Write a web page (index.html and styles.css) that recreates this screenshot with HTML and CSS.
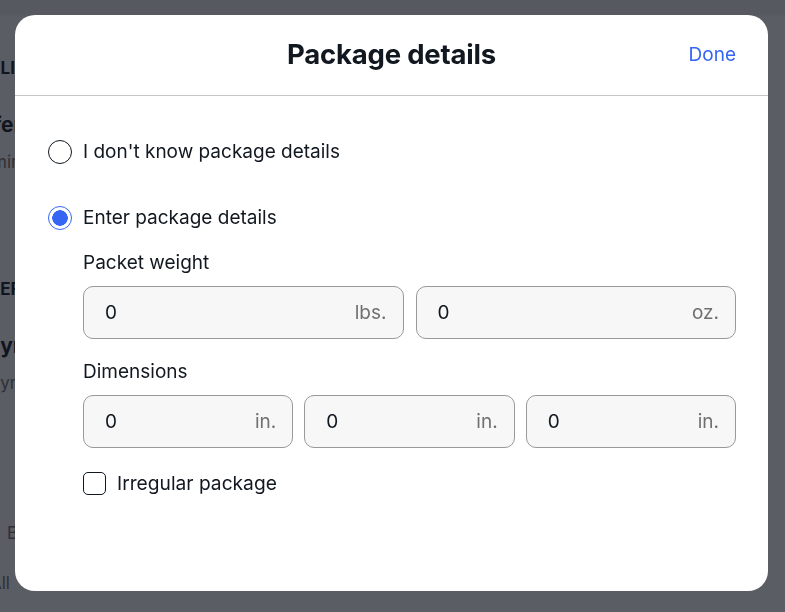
FILE: index.html
```html
<!DOCTYPE html>
<html lang="en">
<head>
    <meta charset="UTF-8">
    <meta name="viewport" content="width=device-width, initial-scale=1.0">
    <title>Package details</title>
    <link rel="stylesheet" href="styles.css">
</head>
<body>
    <div class="page">
        <section class="page-row first">
            <h3 class="page-kicker">DELIVERY</h3>
            <p class="page-strong">Prefer</p>
            <p class="page-muted">Timing</p>
        </section>
        <section class="page-row">
            <h3 class="page-kicker">PREFERENCES</h3>
            <p class="page-strong second">Payr</p>
            <p class="page-muted second">Dynamic</p>
            <p class="page-muted spaced">Buy</p>
            <p class="page-muted tight">All</p>
        </section>
    </div>

    <div class="overlay">
        <div class="modal">
            <header class="modal-header">
                <span></span>
                <h2 class="modal-title">Package details</h2>
                <button class="done-btn">Done</button>
            </header>

            <div class="modal-body">
                <label class="radio-row">
                    <input type="radio" name="pkg" value="unknown">
                    <span class="radio-mark"></span>
                    I don't know package details
                </label>
                <label class="radio-row second">
                    <input type="radio" name="pkg" value="enter" checked>
                    <span class="radio-mark"></span>
                    Enter package details
                </label>

                <div class="details">
                    <div class="field-label">Packet weight</div>
                    <div class="field-row two">
                        <div class="field"><span class="value">0</span><span class="unit">lbs.</span></div>
                        <div class="field"><span class="value">0</span><span class="unit">oz.</span></div>
                    </div>

                    <div class="field-label">Dimensions</div>
                    <div class="field-row three">
                        <div class="field"><span class="value">0</span><span class="unit">in.</span></div>
                        <div class="field"><span class="value">0</span><span class="unit">in.</span></div>
                        <div class="field"><span class="value">0</span><span class="unit">in.</span></div>
                    </div>

                    <label class="check-row">
                        <input type="checkbox">
                        <span class="check-mark"></span>
                        Irregular package
                    </label>
                </div>
            </div>
        </div>
    </div>
</body>
</html>
```

FILE: styles.css
```css
body {
    margin: 0;
    height: 612px;
    overflow: hidden;
    background-color: #f2f2f2;
    font-family: 'Inter', 'Liberation Sans', sans-serif;
    color: #111820;
}

/* page behind the modal */
.page {
    width: 840px;
    margin-left: -22px;
}

.page-row {
    background-color: #fff;
    border-top: 1px solid #f7f7f7;
    padding: 42px 0 0 0;
    height: 180px;
}

.page-row.first {
    margin-top: 15px;
    height: 180px;
}

.page-row + .page-row {
    height: 360px;
    padding-top: 40px;
}

.page-kicker {
    margin: 0;
    font-size: 17px;
    font-weight: 700;
}

.page-strong {
    margin: 34px 0 0 -19px;
    font-size: 21px;
    font-weight: 700;
}

.page-strong.second {
    margin-left: -3px;
}

.page-muted {
    margin: 15px 0 0 -1px;
    font-size: 17px;
    color: #707070;
}

.page-muted.second {
    margin-left: 10px;
}

.page-muted.spaced {
    margin-top: 130px;
    padding-left: 30px;
}

.page-muted.tight {
    margin-top: 30px;
    padding-left: 13px;
}

.overlay {
    position: fixed;
    inset: 0;
    background-color: rgba(17, 21, 31, 0.69);
    padding: 15px 17px 21px 15px;
}

.modal {
    background-color: #fff;
    border-radius: 20px;
    height: 576px;
    overflow: hidden;
}

.modal-header {
    display: grid;
    grid-template-columns: 1fr auto 1fr;
    align-items: center;
    box-sizing: border-box;
    height: 81px;
    border-bottom: 1px solid #c7c7c7;
    padding: 0 32px 2px;
}

.modal-title {
    margin: 0;
    font-size: 27.5px;
    font-weight: 700;
    letter-spacing: -0.2px;
    color: #111820;
}

.done-btn {
    justify-self: end;
    background: none;
    border: none;
    padding: 0;
    font-family: inherit;
    font-size: 19px;
    color: #3665f3;
    cursor: pointer;
}

.modal-body {
    padding: 44px 32px 0 33px;
}

.radio-row,
.check-row {
    display: flex;
    align-items: center;
    font-size: 19px;
    line-height: 24px;
    cursor: pointer;
}

.radio-row input,
.check-row input {
    display: none;
}

.radio-row.second {
    margin-top: 42px;
}

.radio-mark {
    box-sizing: border-box;
    width: 24px;
    height: 24px;
    border: 1.5px solid #111820;
    border-radius: 50%;
    margin-right: 11px;
    flex-shrink: 0;
}

.radio-row input:checked + .radio-mark {
    border-color: #3665f3;
    background: radial-gradient(circle, #3665f3 0 7.5px, #fff 8px);
}

.details {
    padding-left: 35px;
}

.field-label {
    font-size: 19px;
    line-height: 24px;
    margin-top: 21px;
}

.field-label + .field-row {
    margin-top: 11px;
}

.field-row {
    display: grid;
}

.field-row.two {
    grid-template-columns: 1fr 1fr;
    gap: 12px;
}

.field-row.three {
    grid-template-columns: 1fr 1fr 1fr;
    gap: 11px;
}

.field-row + .field-label {
    margin-top: 21px;
}

.field {
    box-sizing: border-box;
    height: 53px;
    display: flex;
    align-items: center;
    justify-content: space-between;
    background-color: #f7f7f7;
    border: 1px solid #999;
    border-radius: 10px;
    padding: 0 16px 0 21px;
    font-size: 19px;
}

.field .unit {
    color: #707070;
}

.check-row {
    margin-top: 23px;
    font-size: 19.2px;
}

.check-mark {
    box-sizing: border-box;
    width: 23px;
    height: 23px;
    border: 1.5px solid #111820;
    border-radius: 5px;
    margin-right: 11px;
}
```
